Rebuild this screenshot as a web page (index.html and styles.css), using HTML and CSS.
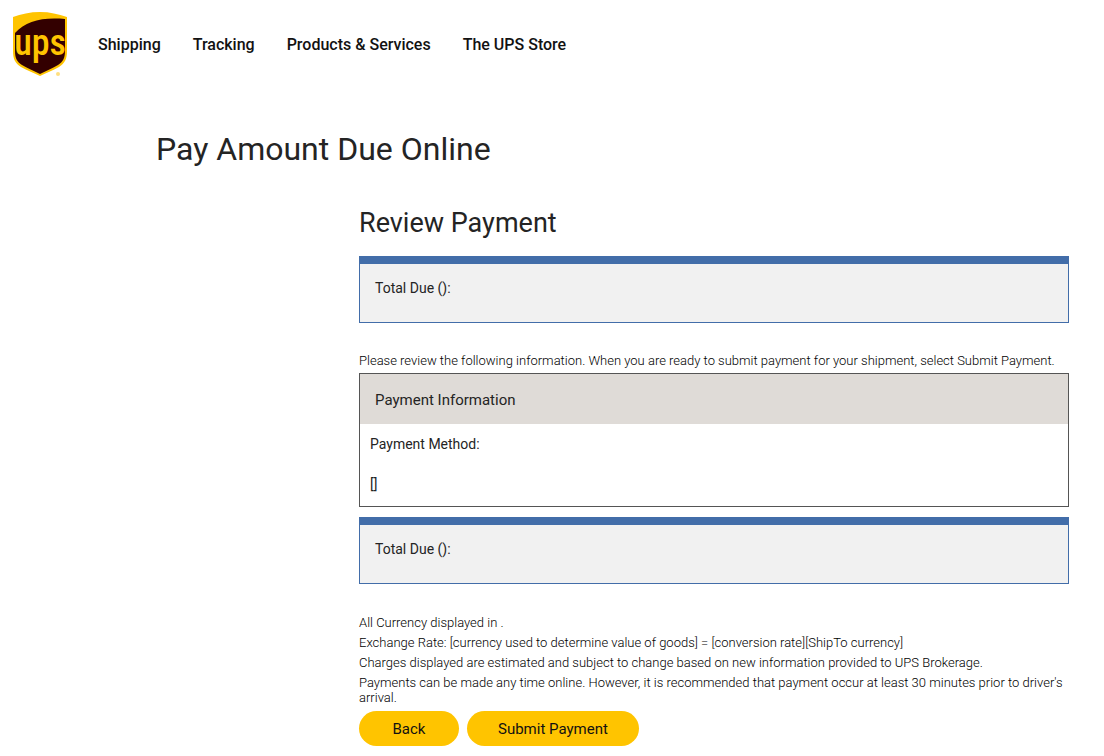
FILE: index.html
```html
<!DOCTYPE html>
<html lang="en">
<head>
  <meta charset="UTF-8" />
  <meta name="viewport" content="width=device-width, initial-scale=1.0"/>
  <title>Pay Amount Due Online</title>
  <link rel="stylesheet" href="styles.css">
</head>
<body>
  <header class="header">
    <a href="#" class="logo" aria-label="UPS">
      <svg width="56" height="66" viewBox="0 0 56 66">
        <path fill="#ffc400" d="M1 5C9 2 18 0 28 0s18 2 27 5v34c0 8-2 12-8 16-5 3-13 6-19 9-6-3-14-6-19-9-6-4-8-8-8-16z"/>
        <path fill="#330000" d="M3 21C14 9 30 5 53 7v32c0 7-2 11-7 14-5 3-12 6-18 9-6-3-13-6-18-9-5-3-7-7-7-14z"/>
        <text class="logo-text" x="28" y="43" text-anchor="middle">ups</text>
        <circle cx="46" cy="62" r="2" fill="#ffdf80"/>
      </svg>
    </a>
    <nav class="nav">
      <a href="#">Shipping</a>
      <a href="#">Tracking</a>
      <a href="#">Products &amp; Services</a>
      <a href="#">The UPS Store</a>
    </nav>
  </header>

  <main class="main">
    <h1>Pay Amount Due Online</h1>

    <div class="content">
      <h2>Review Payment</h2>

      <div class="total">Total Due ():</div>

      <p class="intro">Please review the following information. When you are ready to submit payment for your shipment, select Submit Payment.</p>

      <section class="panel">
        <h3>Payment Information</h3>
        <div class="panel-body">
          <p>Payment Method:</p>
          <p>[]</p>
        </div>
      </section>

      <div class="total">Total Due ():</div>

      <div class="notes">
        <p>All Currency displayed in .</p>
        <p>Exchange Rate: [currency used to determine value of goods] = [conversion rate][ShipTo currency]</p>
        <p>Charges displayed are estimated and subject to change based on new information provided to UPS Brokerage.</p>
        <p>Payments can be made any time online. However, it is recommended that payment occur at least 30 minutes prior to driver's arrival.</p>
      </div>

      <form class="buttons">
        <button type="button">Back</button>
        <button type="button">Submit Payment</button>
      </form>
    </div>
  </main>
</body>
</html>
```

FILE: styles.css
```css
* {
  box-sizing: border-box;
}

body {
  margin: 0;
  font-family: Roboto, "Liberation Sans", sans-serif;
  font-size: 13px;
  line-height: 15px;
  color: #000;
  background: #fff;
}

h1, h2, h3, p {
  margin: 0;
  font-weight: 400;
}

.header {
  display: flex;
  align-items: center;
  height: 90px;
  padding: 0 12px;
}

.logo {
  display: flex;
}

.logo-text {
  font-family: "Roboto Condensed", Roboto, sans-serif;
  font-size: 36px;
  font-weight: 500;
  fill: #ffc400;
}

.nav {
  display: flex;
  gap: 32px;
  margin-left: 30px;
}

.nav a {
  font-size: 16px;
  line-height: 24px;
  font-weight: 500;
  color: #121212;
  text-decoration: none;
}

.main {
  padding: 39px 35px 10px 156px;
}

h1 {
  font-size: 32px;
  line-height: 40px;
  color: #242424;
}

.content {
  margin: 38px 0 0 203px;
}

h2 {
  font-size: 27px;
  line-height: 32px;
  margin-bottom: 17px;
  color: #242424;
}

.total {
  min-height: 67px;
  padding: 16px 15px;
  border: 1px solid #426da9;
  border-top-width: 8px;
  background: #f1f1f1;
  font-size: 14px;
  line-height: 16px;
  color: #242424;
}

.intro {
  margin: 30px 0 5px;
  font-weight: 300;
}

.panel {
  margin-bottom: 10px;
  border: 1px solid #555;
}

.panel h3 {
  padding: 16px 15px 14px;
  background: #dfdbd7;
  font-size: 15px;
  line-height: 20px;
  color: #242424;
}

.panel-body {
  display: grid;
  gap: 20px;
  padding: 10px 10px 12px;
  font-size: 14px;
  line-height: 20px;
  color: #242424;
}

.notes {
  display: grid;
  gap: 5px;
  margin-top: 31px;
}

.notes p {
  font-weight: 300;
}

.buttons {
  display: flex;
  gap: 8px;
  margin-top: 6px;
}

button {
  height: 35px;
  min-width: 100px;
  padding: 0 31px;
  border: none;
  border-radius: 18px;
  background: #ffc400;
  color: #121212;
  font-family: inherit;
  font-size: 15px;
  cursor: pointer;
}
```
